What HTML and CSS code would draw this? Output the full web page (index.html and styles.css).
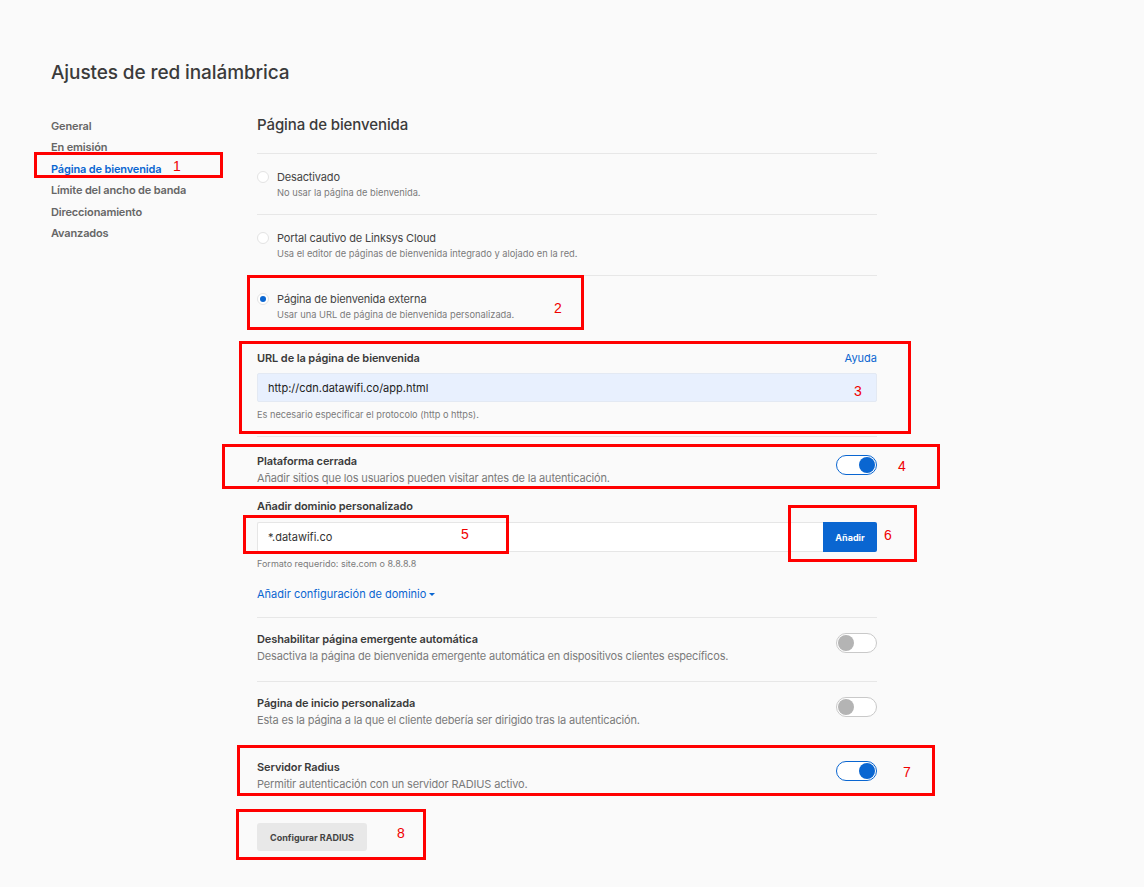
FILE: index.html
```html
<!DOCTYPE html>
<html lang="es">
<head>
<meta charset="utf-8">
<title>Ajustes de red inalámbrica</title>
<link rel="stylesheet" href="styles.css">
</head>
<body>
<div class="page">
  <h1 class="title">Ajustes de red inalámbrica</h1>
  <div class="layout">
    <nav class="sidenav">
      <a class="nav-item">General</a>
      <a class="nav-item">En emisión</a>
      <a class="nav-item active">Página de bienvenida</a>
      <a class="nav-item">Límite del ancho de banda</a>
      <a class="nav-item">Direccionamiento</a>
      <a class="nav-item">Avanzados</a>
    </nav>
    <main class="content">
      <h2 class="section-title">Página de bienvenida</h2>

      <div class="radio-row">
        <span class="radio"></span>
        <div class="radio-text">
          <div class="radio-title">Desactivado</div>
          <div class="radio-sub">No usar la página de bienvenida.</div>
        </div>
      </div>
      <div class="radio-row">
        <span class="radio"></span>
        <div class="radio-text">
          <div class="radio-title">Portal cautivo de Linksys Cloud</div>
          <div class="radio-sub">Usa el editor de páginas de bienvenida integrado y alojado en la red.</div>
        </div>
      </div>
      <div class="radio-row">
        <span class="radio checked"></span>
        <div class="radio-text">
          <div class="radio-title">Página de bienvenida externa</div>
          <div class="radio-sub">Usar una URL de página de bienvenida personalizada.</div>
        </div>
      </div>

      <div class="url-field">
        <div class="field-head">
          <span class="field-label">URL de la página de bienvenida</span>
          <a class="help-link">Ayuda</a>
        </div>
        <div class="input input-filled">http://cdn.datawifi.co/app.html</div>
        <div class="hint">Es necesario especificar el protocolo (http o https).</div>
      </div>

      <div class="toggle-row first">
        <div class="toggle-text">
          <div class="toggle-title">Plataforma cerrada</div>
          <div class="toggle-sub">Añadir sitios que los usuarios pueden visitar antes de la autenticación.</div>
        </div>
        <span class="toggle on"><span class="knob"></span></span>
      </div>

      <div class="domain-field">
        <div class="field-label">Añadir dominio personalizado</div>
        <div class="input-group">
          <div class="input input-plain">*.datawifi.co</div>
          <button class="btn-primary">Añadir</button>
        </div>
        <div class="hint">Formato requerido: site.com o 8.8.8.8</div>
        <a class="link-more">Añadir configuración de dominio<span class="caret"></span></a>
      </div>

      <div class="toggle-row">
        <div class="toggle-text">
          <div class="toggle-title">Deshabilitar página emergente automática</div>
          <div class="toggle-sub">Desactiva la página de bienvenida emergente automática en dispositivos clientes específicos.</div>
        </div>
        <span class="toggle"><span class="knob"></span></span>
      </div>

      <div class="toggle-row">
        <div class="toggle-text">
          <div class="toggle-title">Página de inicio personalizada</div>
          <div class="toggle-sub">Esta es la página a la que el cliente debería ser dirigido tras la autenticación.</div>
        </div>
        <span class="toggle"><span class="knob"></span></span>
      </div>

      <div class="toggle-row last">
        <div class="toggle-text">
          <div class="toggle-title">Servidor Radius</div>
          <div class="toggle-sub">Permitir autenticación con un servidor RADIUS activo.</div>
        </div>
        <span class="toggle on"><span class="knob"></span></span>
      </div>

      <button class="btn-secondary">Configurar RADIUS</button>
    </main>
  </div>

  <div class="mark mark-1"></div><span class="num num-1">1</span>
  <div class="mark mark-2"></div><span class="num num-2">2</span>
  <div class="mark mark-3"></div><span class="num num-3">3</span>
  <div class="mark mark-4"></div><span class="num num-4">4</span>
  <div class="mark mark-5"></div><span class="num num-5">5</span>
  <div class="mark mark-6"></div><span class="num num-6">6</span>
  <div class="mark mark-7"></div><span class="num num-7">7</span>
  <div class="mark mark-8"></div><span class="num num-8">8</span>
</div>
</body>
</html>
```
FILE: styles.css
```css
* { box-sizing: border-box; }
html, body { margin: 0; padding: 0; }
body {
  background: #fafafa;
  font-family: Inter, "Noto Sans", "Liberation Sans", sans-serif;
  color: #3a3a3a;
  width: 1144px;
  height: 887px;
  overflow: hidden;
}
.page {
  position: relative;
  padding: 61px 0 0 51px;
  height: 887px;
}
.title {
  margin: 0;
  font-size: 19px;
  line-height: 24px;
  font-weight: 500;
  color: #3b3b3b;
  letter-spacing: -0.1px;
}
.layout {
  display: flex;
  margin-top: 30px;
}
.sidenav {
  width: 206px;
  padding-top: 1px;
  display: flex;
  flex-direction: column;
}
.nav-item {
  font-size: 11px;
  line-height: 21.4px;
  font-weight: 600;
  color: #666;
  letter-spacing: -0.15px;
}
.nav-item.active { color: #0a66d1; }

.content {
  width: 620px;
  display: flex;
  flex-direction: column;
}
.section-title {
  margin: 0 0 18px;
  font-size: 15px;
  line-height: 20px;
  font-weight: 500;
  color: #3b3b3b;
  letter-spacing: -0.1px;
}
.radio-row {
  display: flex;
  align-items: flex-start;
  border-top: 1px solid #e7e7e7;
  padding: 16px 0 15px;
}
.radio {
  width: 12px;
  height: 12px;
  border-radius: 50%;
  border: 1px solid #e3e3e3;
  background: #fff;
  margin: 1px 8px 0 0;
  display: flex;
  align-items: center;
  justify-content: center;
  flex: none;
}
.radio.checked::after {
  content: "";
  width: 6px;
  height: 6px;
  border-radius: 50%;
  background: #0a66d1;
}
.radio-title {
  font-size: 11px;
  line-height: 14px;
  color: #444;
  letter-spacing: -0.15px;
}
.radio-sub {
  margin-top: 3px;
  font-size: 9.3px;
  line-height: 12px;
  color: #7a7a7a;
}

.url-field {
  padding: 15px 0 15px;
  border-bottom: 1px solid #e7e7e7;
}
.field-head {
  display: flex;
  justify-content: space-between;
  align-items: center;
}
.field-label {
  font-size: 11px;
  line-height: 14px;
  font-weight: 600;
  color: #3a3a3a;
  letter-spacing: -0.1px;
}
.help-link {
  font-size: 11px;
  line-height: 14px;
  color: #0a66d1;
}
.input {
  height: 29px;
  display: flex;
  align-items: center;
  padding: 0 10px;
  font-size: 11px;
  color: #222;
  border-radius: 2px;
}
.input-filled {
  margin-top: 8px;
  background: #e8f0fe;
  border: 1px solid #e3e9f3;
}
.hint {
  margin-top: 7px;
  font-size: 9.2px;
  line-height: 12px;
  color: #7a7a7a;
}
.toggle-row {
  display: flex;
  justify-content: space-between;
  align-items: flex-start;
  padding: 14px 0 18px;
  border-bottom: 1px solid #e7e7e7;
}
.toggle-row.first {
  padding: 17px 0 0;
  border-bottom: none;
}
.toggle-row.last { border-bottom: none; }
.toggle-title {
  font-size: 11px;
  line-height: 14px;
  font-weight: 600;
  color: #3a3a3a;
  letter-spacing: -0.1px;
}
.toggle-sub {
  margin-top: 3px;
  font-size: 11px;
  line-height: 14px;
  color: #7a7a7a;
  letter-spacing: -0.17px;
}
.toggle {
  flex: none;
  width: 41px;
  height: 20px;
  margin-top: 1px;
  border-radius: 10px;
  border: 1px solid #c9c9c9;
  background: #fff;
  display: flex;
  align-items: center;
  padding: 0 1px;
}
.toggle .knob {
  width: 16px;
  height: 16px;
  border-radius: 50%;
  background: #b4b4b4;
}
.toggle.on {
  border: 1.5px solid #0a66d1;
  justify-content: flex-end;
}
.toggle.on .knob { background: #0a66d1; }

.domain-field {
  padding: 14px 0 16px;
  border-bottom: 1px solid #e7e7e7;
  display: flex;
  flex-direction: column;
}
.input-group {
  margin-top: 9px;
  display: flex;
  height: 30px;
}
.input-plain {
  flex: 1;
  height: 30px;
  background: #fff;
  border: 1px solid #e6e6e6;
  border-right: none;
  border-radius: 2px 0 0 2px;
  color: #333;
}
.btn-primary {
  width: 54px;
  height: 30px;
  border: none;
  border-radius: 0 2px 2px 0;
  background: #0a66d1;
  color: #fff;
  font-family: inherit;
  font-size: 9px;
  font-weight: 700;
  padding: 0;
}
.domain-field .hint { margin-top: 6px; font-size: 9px; }
.link-more {
  margin-top: 17px;
  font-size: 11px;
  line-height: 14px;
  color: #0a66d1;
  display: flex;
  align-items: center;
}
.caret {
  margin-left: 3px;
  width: 0;
  height: 0;
  border-left: 3px solid transparent;
  border-right: 3px solid transparent;
  border-top: 3px solid #0a66d1;
}
.btn-secondary {
  align-self: flex-start;
  margin-top: 14px;
  width: 110px;
  height: 28px;
  border: none;
  border-radius: 3px;
  background: #e8e8e8;
  color: #444;
  font-family: inherit;
  font-size: 9px;
  font-weight: 700;
  padding: 0;
}

/* annotation overlays */
.mark {
  position: absolute;
  border: 3px solid #ff0000;
}
.num {
  position: absolute;
  font-family: "Liberation Sans", sans-serif;
  font-size: 14px;
  line-height: 16px;
  color: #f00000;
}
.mark-1 { left: 34px; top: 152px; width: 189px; height: 26px; }
.mark-2 { left: 247px; top: 275px; width: 337px; height: 55px; }
.mark-3 { left: 239px; top: 341px; width: 672px; height: 93px; }
.mark-4 { left: 222px; top: 444px; width: 718px; height: 45px; }
.mark-5 { left: 243px; top: 515px; width: 266px; height: 39px; }
.mark-6 { left: 788px; top: 505px; width: 129px; height: 57px; }
.mark-7 { left: 237px; top: 745px; width: 698px; height: 51px; }
.mark-8 { left: 236px; top: 809px; width: 190px; height: 51px; }
.num-1 { left: 173px; top: 158px; }
.num-2 { left: 554px; top: 300px; }
.num-3 { left: 854px; top: 383px; }
.num-4 { left: 898px; top: 458px; }
.num-5 { left: 461px; top: 526px; }
.num-6 { left: 884px; top: 527px; }
.num-7 { left: 903px; top: 764px; }
.num-8 { left: 397px; top: 825px; }
```
